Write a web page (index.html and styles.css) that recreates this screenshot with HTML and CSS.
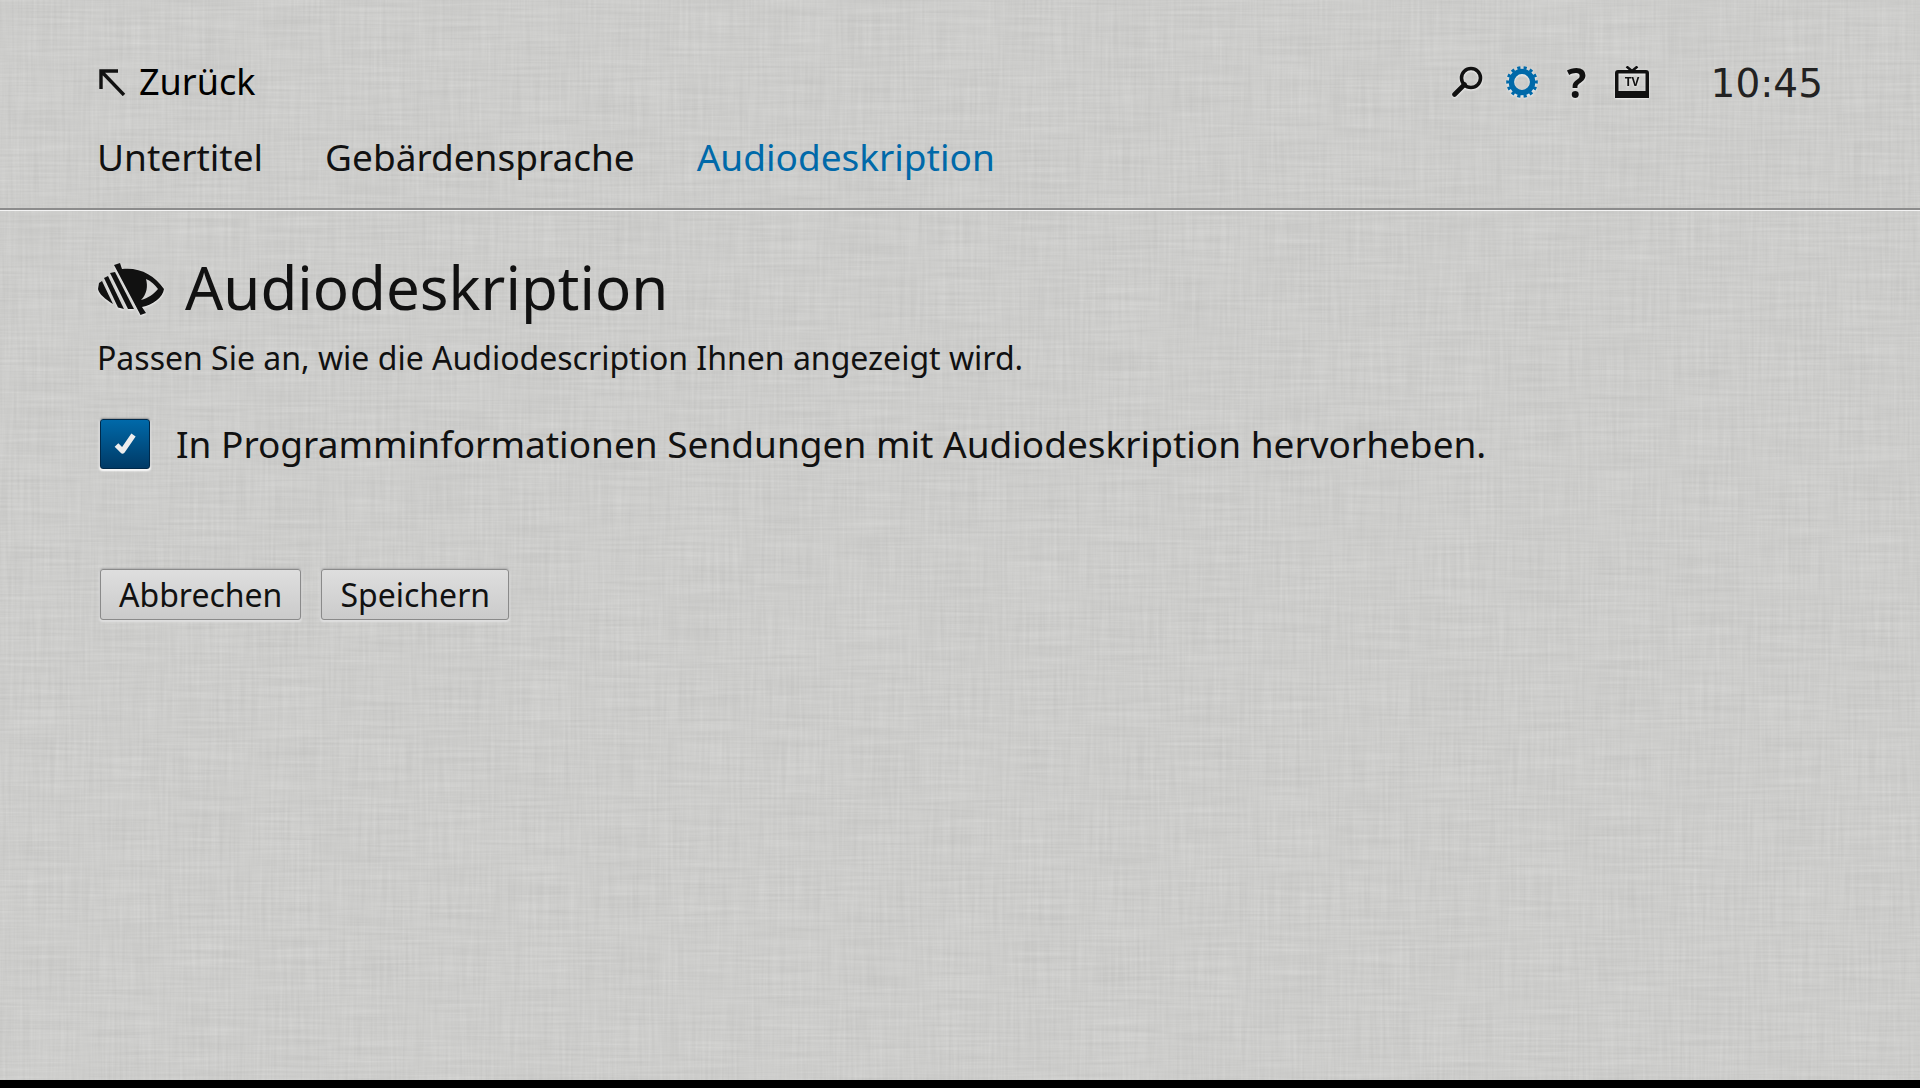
FILE: index.html
```html
<!DOCTYPE html>
<html lang="de">
<head>
  <meta charset="UTF-8">
  <meta name="viewport" content="width=device-width, initial-scale=1.0">
  <title>Audiodeskription</title>
  <link rel="stylesheet" href="styles.css">
</head>
<body>
  <div class="screen">
    <svg class="texture" aria-hidden="true">
      <filter id="brushed-h" x="0" y="0" width="100%" height="100%" color-interpolation-filters="sRGB">
        <feTurbulence type="fractalNoise" baseFrequency="0.012 0.35" numOctaves="3" seed="4"/>
        <feColorMatrix values="0.12 0 0 0 0.742  0.12 0 0 0 0.742  0.12 0 0 0 0.735  0 0 0 0 1"/>
      </filter>
      <filter id="brushed-v" x="0" y="0" width="100%" height="100%" color-interpolation-filters="sRGB">
        <feTurbulence type="fractalNoise" baseFrequency="0.35 0.015" numOctaves="2" seed="9"/>
        <feColorMatrix values="0.1 0 0 0 0.752  0.1 0 0 0 0.752  0.1 0 0 0 0.745  0 0 0 0 0.5"/>
      </filter>
      <rect width="100%" height="100%" filter="url(#brushed-h)"/>
      <rect width="100%" height="100%" filter="url(#brushed-v)"/>
    </svg>

    <header class="header">
      <div class="topbar">
        <a class="back" href="#">
          <svg width="30" height="28" viewBox="0 0 30 28" fill="none" stroke="#111" stroke-width="3.4">
            <path d="M21 3H4V21M4 3L27 27"/>
          </svg>
          Zurück
        </a>
        <div class="tools">
          <a class="tool" href="#" aria-label="Suche">
            <svg width="32" height="32" viewBox="0 0 32 32" fill="none" stroke="#111">
              <circle cx="20" cy="12" r="9.5" stroke-width="3.6"/>
              <path d="M13.5 18.5L3.5 28.5" stroke-width="4.6" stroke-linecap="round"/>
            </svg>
          </a>
          <a class="tool" href="#" aria-label="Einstellungen">
            <svg width="32" height="32" viewBox="0 0 32 32" fill="none" stroke="#0069a9">
              <circle cx="16" cy="16" r="10.6" stroke-width="5.400"/>
              <circle cx="16" cy="16" r="14.2" stroke-width="3.2" pathLength="28" stroke-dasharray="1 1" stroke-dashoffset="0.5"/>
            </svg>
          </a>
          <a class="tool help" href="#" aria-label="Hilfe">?</a>
          <a class="tool" href="#" aria-label="TV">
            <svg width="34" height="32" viewBox="0 0 34 32">
              <path d="M0 7Q0 4 3 4H31Q34 4 34 7V32H0ZM3.500 7.500V25H30.500V7.500Z" fill="#111" fill-rule="evenodd"/>
              <path d="M11.500 0.500L17 5L22.500 0.500" fill="none" stroke="#111" stroke-width="2.600"/>
              <text class="tv-text" x="17" y="20" text-anchor="middle">TV</text>
            </svg>
          </a>
          <time class="clock">10:45</time>
        </div>
      </div>
      <nav class="tabs">
        <a class="tab" href="#">Untertitel</a>
        <a class="tab" href="#">Gebärdensprache</a>
        <a class="tab active" href="#">Audiodeskription</a>
      </nav>
    </header>

    <main class="content">
      <h1 class="title">
        <svg class="eye" width="68" height="52" viewBox="0 0 68 52" fill="#111">
          <path d="M25 6C43 4 57 12 67 26C66 34 56 42 45 44L49 50L43.500 52L17 2L23 0Z"/>
          <path class="eye-white" d="M49 16C54 18 58 22 61 26C57 31 51 35 44 37C50 31 51 23 49 16Z"/>
          <path d="M13 10L18 9L37 46L31 46Z"/>
          <path d="M7 15L11 13L27 46L21 44.500Z"/>
          <path d="M2 20L5 18L16 41C8 36 2 31 1 26Z"/>
        </svg>
        Audiodeskription
      </h1>
      <p class="intro">Passen Sie an, wie die Audiodescription Ihnen angezeigt wird.</p>
      <form>
        <div class="option">
          <input class="check" type="checkbox" id="highlight" checked>
          <svg class="tick" width="22" height="22" viewBox="0 0 22 22" fill="none" stroke="#eee" stroke-width="5.200">
            <path d="M2.500 12L8.500 18L19.500 2" stroke-linejoin="round"/>
          </svg>
          <label for="highlight">In Programminformationen Sendungen mit Audiodeskription hervorheben.</label>
        </div>
        <div class="actions">
          <button class="btn" type="button">Abbrechen</button>
          <button class="btn" type="button">Speichern</button>
        </div>
      </form>
    </main>
  </div>
</body>
</html>
```
FILE: styles.css
```css
* {
  box-sizing: border-box;
}
body {
  margin: 0;
  background-color: #000;
  color: #111;
  font-family: "Noto Sans", "Open Sans", sans-serif;
}
a {
  color: inherit;
  text-decoration: none;
}
.screen {
  position: relative;
  aspect-ratio: 16 / 9;
  overflow: hidden;
  background-color: #cccccb;
}
.texture {
  position: absolute;
  inset: 0;
  width: 100%;
  height: 100%;
}
.header {
  position: relative;
  padding: 58px 97px 27px;
  border-bottom: 2px solid #8c8c8c;
  box-shadow: 0 1px 0 #f4f4f4;
}
.topbar {
  display: flex;
  justify-content: space-between;
  align-items: center;
  height: 48px;
}
.back {
  display: flex;
  align-items: center;
  gap: 12px;
  color: #000;
  font-size: 36px;
  line-height: 48px;
}
.tools {
  display: flex;
  align-items: center;
}
.tool {
  display: flex;
  justify-content: center;
  width: 34px;
  margin-right: 21px;
  filter: drop-shadow(0 1px 1px #f4f4f4);
}
.help {
  font-size: 41px;
  font-weight: bold;
  line-height: 48px;
}
.tv-text {
  font-size: 12px;
  font-weight: bold;
  fill: #111;
}
.clock {
  margin-left: 41px;
  color: #222;
  font-family: "DejaVu Sans", Verdana, sans-serif;
  font-size: 39px;
  line-height: 48px;
  padding-top: 4px;
}
.tabs {
  display: flex;
  gap: 62px;
  margin-top: 27px;
  font-size: 37px;
  line-height: 48px;
}
.active {
  color: #0069a9;
}
.content {
  position: relative;
  padding: 37px 97px;
}
.title {
  display: flex;
  align-items: center;
  gap: 20px;
  margin: 0;
  font-size: 60px;
  font-weight: normal;
  line-height: 80px;
}
.eye {
  margin-top: 4px;
  filter: drop-shadow(0 1px 1px #f4f4f4);
}
.eye-white {
  fill: #d4d4d3;
}
.intro {
  margin: 9px 0 39px;
  font-size: 32px;
  line-height: 44px;
}
.option {
  position: relative;
  display: flex;
  align-items: center;
  gap: 26px;
  padding-left: 3px;
  font-size: 37px;
  line-height: 48px;
}
.check {
  appearance: none;
  flex: none;
  width: 50px;
  height: 50px;
  margin: 0;
  border: 1px solid #00294a;
  border-radius: 3px;
  background: linear-gradient(#0069a9, #003a66);
  box-shadow: 0 -1px 2px #888, 0 1px 2px 1px #fff;
}
.tick {
  position: absolute;
  left: 17px;
  top: 14px;
  pointer-events: none;
}
.check:not(:checked) + .tick {
  display: none;
}
.actions {
  display: flex;
  gap: 20px;
  margin-top: 100px;
  padding-left: 3px;
}
.btn {
  height: 51px;
  padding: 0 18px;
  border: 1px solid #8a8a8a;
  border-radius: 3px;
  background: linear-gradient(#dedede, #cbcbcb);
  box-shadow: 0 -1px 2px #aaa, 0 1px 2px 1px #e2e2e2;
  color: #111;
  font-family: inherit;
  font-size: 32px;
  line-height: 48px;
}
```
